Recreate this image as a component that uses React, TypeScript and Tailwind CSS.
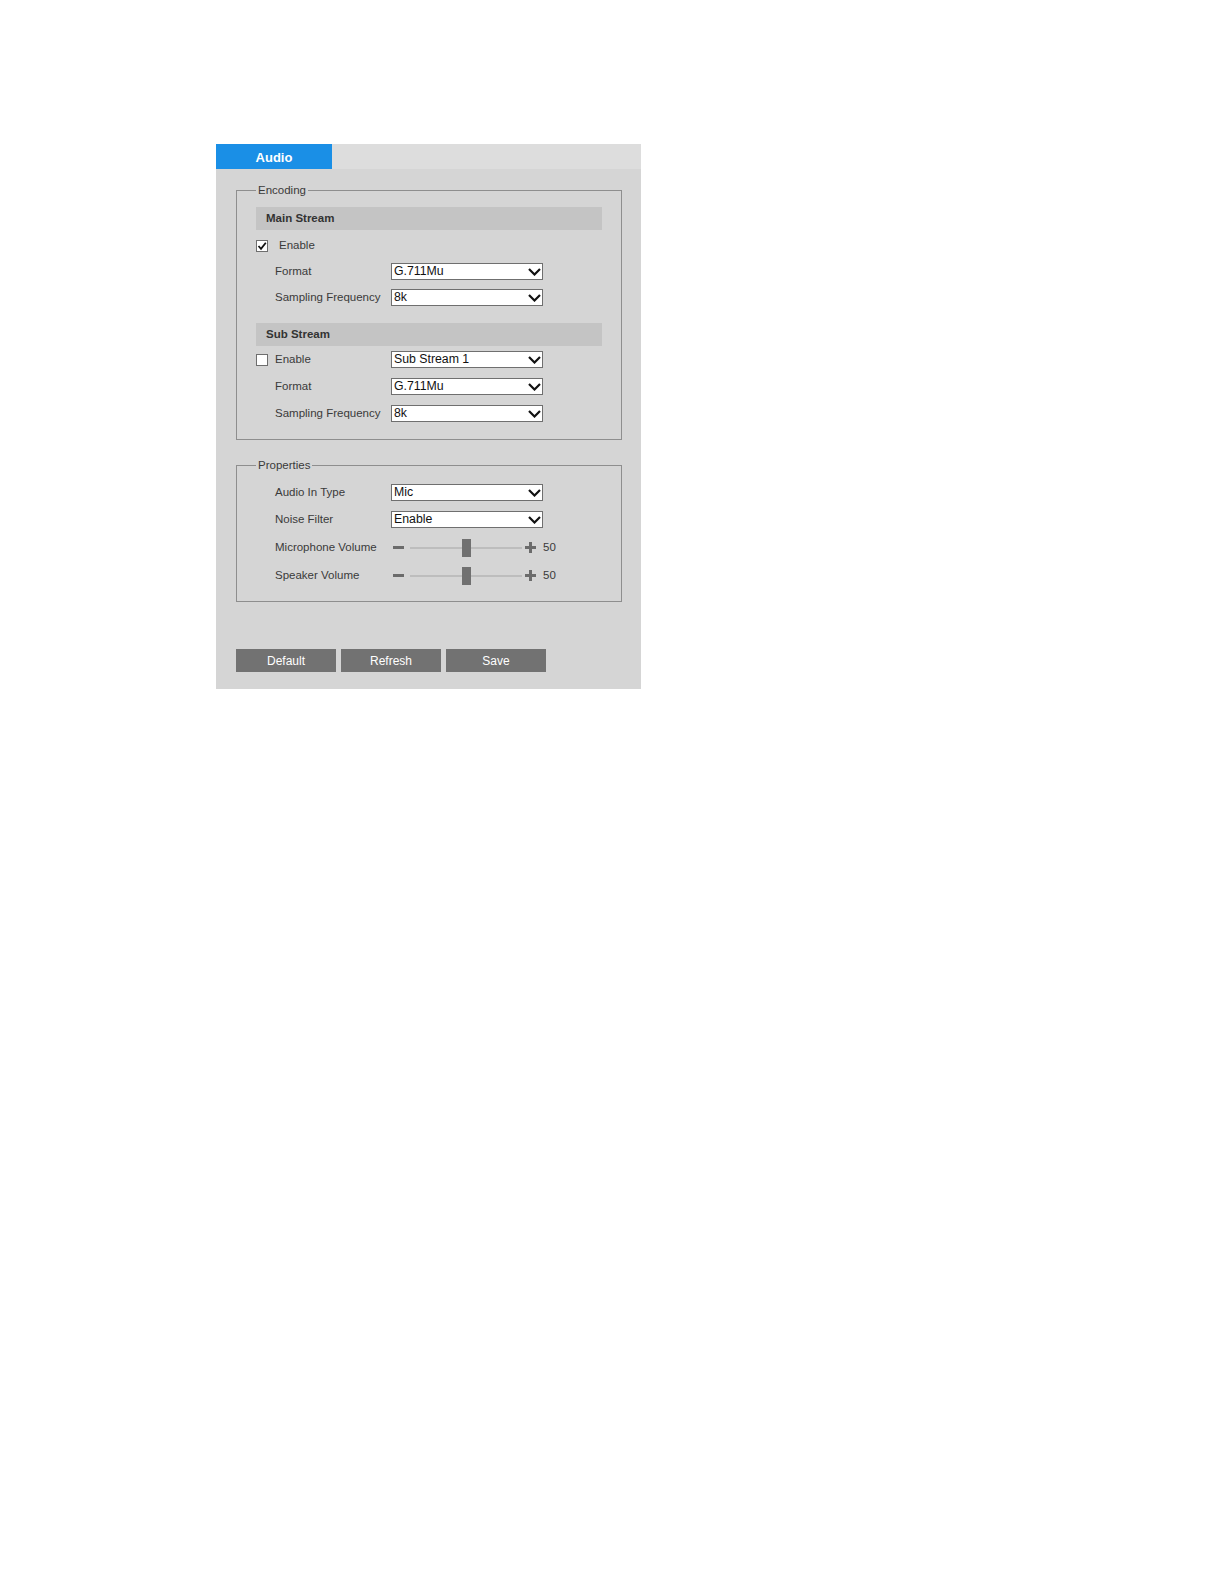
import React from "react";

const FONT = { fontFamily: '"Liberation Sans", Arial, sans-serif' };

function Chevron() {
  return (
    <svg width="13" height="8" viewBox="0 0 13 8" className="shrink-0">
      <polyline points="1,1 6.5,6.5 12,1" fill="none" stroke="#111" strokeWidth="2.2" />
    </svg>
  );
}

function Select({ value }: { value: string }) {
  return (
    <div className="w-[152px] h-[17px] bg-white border border-[#6f6f6f] flex items-center justify-between pl-[2px] pr-[1px]">
      <span className="text-[12.3px] leading-none text-[#111]">{value}</span>
      <Chevron />
    </div>
  );
}

function Checkbox({ checked }: { checked?: boolean }) {
  return (
    <div className="w-[12px] h-[12px] bg-white border border-[#6e6e6e] flex items-center justify-center shrink-0">
      {checked && (
        <svg width="10" height="10" viewBox="0 0 10 10">
          <polyline points="1.5,5 4,7.8 8.8,1.8" fill="none" stroke="#111" strokeWidth="1.8" />
        </svg>
      )}
    </div>
  );
}

function Row({ label, value, h = "h-[27px]" }: { label: string; value: string; h?: string }) {
  return (
    <div className={`flex items-center ${h}`}>
      <div className="w-[135px] pl-[19px] text-[11.5px] text-[#3a3a3a]">{label}</div>
      <Select value={value} />
    </div>
  );
}

function SliderRow({ label, value, h }: { label: string; value: number; h: string }) {
  return (
    <div className={`flex items-center ${h}`}>
      <div className="w-[135px] pl-[19px] text-[11.5px] text-[#3a3a3a]">{label}</div>
      <div className="flex items-center">
        <div className="ml-[2px] w-[11px] h-[3px] bg-[#6b6b6b]" />
        <div className="relative ml-[6px] w-[112px] h-[2px] bg-[#bdbdbd]">
          <div className="absolute left-[52px] top-[-8px] w-[9px] h-[18px] bg-[#707070]" />
        </div>
        <svg width="11" height="11" viewBox="0 0 11 11" className="ml-[3px]">
          <rect x="0" y="4" width="11" height="3" fill="#6b6b6b" />
          <rect x="4" y="0" width="3" height="11" fill="#6b6b6b" />
        </svg>
        <span className="ml-[7px] text-[11.5px] text-[#3a3a3a]">{value}</span>
      </div>
    </div>
  );
}

function Header({ title, className = "" }: { title: string; className?: string }) {
  return (
    <div className={`h-[23px] bg-[#c4c4c4] flex items-center pl-[10px] text-[11.5px] font-bold text-[#333] ${className}`}>
      {title}
    </div>
  );
}

export default function App() {
  return (
    <div className="min-h-[1584px] bg-white pl-[216px] pt-[144px]" style={FONT}>
      <div className="w-[425px] bg-[#d5d5d5]">
        <div className="h-[25px] bg-[#dddddd] flex">
          <div className="w-[116px] bg-[#1a8fe6] flex items-center justify-center pt-[2px] text-white font-bold text-[13px]">
            Audio
          </div>
        </div>

        <div className="pl-[20px] pr-[19px] pt-[14px] pb-[17px]">
          <fieldset className="border border-[#8e8e8e] px-[19px] pt-[10px] pb-[12px]">
            <legend className="px-[2px] text-[11.5px] leading-[14px] text-[#3a3a3a]">Encoding</legend>
            <Header title="Main Stream" />
            <div className="flex items-center h-[27px] mt-[2px]">
              <Checkbox checked />
              <span className="ml-[11px] text-[11.5px] text-[#3a3a3a]">Enable</span>
            </div>
            <Row label="Format" value="G.711Mu" h="h-[25px]" />
            <Row label="Sampling Frequency" value="8k" />

            <Header title="Sub Stream" className="mt-[12px]" />
            <div className="flex items-center h-[27px]">
              <div className="w-[135px] flex items-center">
                <Checkbox />
                <span className="ml-[7px] text-[11.5px] text-[#3a3a3a]">Enable</span>
              </div>
              <Select value="Sub Stream 1" />
            </div>
            <Row label="Format" value="G.711Mu" />
            <Row label="Sampling Frequency" value="8k" />
          </fieldset>

          <fieldset className="mt-[18px] border border-[#8e8e8e] px-[19px] pt-[7px] pb-[12px]">
            <legend className="px-[2px] text-[11.5px] leading-[14px] text-[#3a3a3a]">Properties</legend>
            <Row label="Audio In Type" value="Mic" />
            <Row label="Noise Filter" value="Enable" />
            <SliderRow label="Microphone Volume" value={50} h="h-[29px]" />
            <SliderRow label="Speaker Volume" value={50} h="h-[27px]" />
          </fieldset>

          <div className="mt-[47px] flex gap-[5px]">
            {["Default", "Refresh", "Save"].map((b) => (
              <button
                key={b}
                className="w-[100px] h-[23px] bg-[#727272] text-white text-[12px] flex items-center justify-center"
              >
                {b}
              </button>
            ))}
          </div>
        </div>
      </div>
    </div>
  );
}
